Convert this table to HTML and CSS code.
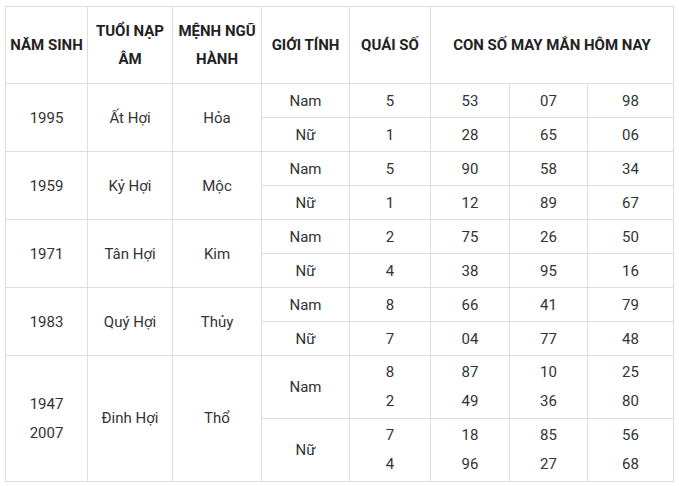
FILE: index.html
```html
<!DOCTYPE html>
<html lang="vi">
<head>
<meta charset="utf-8">
<link rel="stylesheet" href="styles.css">
</head>
<body>
<table class="lucky">
  <colgroup>
    <col class="c1"><col class="c2"><col class="c3"><col class="c4"><col class="c5"><col class="c6"><col class="c7"><col class="c8">
  </colgroup>
  <thead>
    <tr class="head">
      <th>NĂM SINH</th>
      <th>TUỔI NẠP<br>ÂM</th>
      <th>MỆNH NGŨ<br>HÀNH</th>
      <th>GIỚI TÍNH</th>
      <th>QUÁI SỐ</th>
      <th colspan="3">CON SỐ MAY MẮN HÔM NAY</th>
    </tr>
  </thead>
  <tbody>
    <tr class="row"><td rowspan="2">1995</td><td rowspan="2">Ất Hợi</td><td rowspan="2">Hỏa</td><td>Nam</td><td>5</td><td>53</td><td>07</td><td>98</td></tr>
    <tr class="row"><td>Nữ</td><td>1</td><td>28</td><td>65</td><td>06</td></tr>
    <tr class="row"><td rowspan="2">1959</td><td rowspan="2">Kỷ Hợi</td><td rowspan="2">Mộc</td><td>Nam</td><td>5</td><td>90</td><td>58</td><td>34</td></tr>
    <tr class="row"><td>Nữ</td><td>1</td><td>12</td><td>89</td><td>67</td></tr>
    <tr class="row"><td rowspan="2">1971</td><td rowspan="2">Tân Hợi</td><td rowspan="2">Kim</td><td>Nam</td><td>2</td><td>75</td><td>26</td><td>50</td></tr>
    <tr class="row"><td>Nữ</td><td>4</td><td>38</td><td>95</td><td>16</td></tr>
    <tr class="row"><td rowspan="2">1983</td><td rowspan="2">Quý Hợi</td><td rowspan="2">Thủy</td><td>Nam</td><td>8</td><td>66</td><td>41</td><td>79</td></tr>
    <tr class="row"><td>Nữ</td><td>7</td><td>04</td><td>77</td><td>48</td></tr>
    <tr class="row tall"><td rowspan="2">1947<br>2007</td><td rowspan="2">Đinh Hợi</td><td rowspan="2">Thổ</td><td>Nam</td><td>8<br>2</td><td>87<br>49</td><td>10<br>36</td><td>25<br>80</td></tr>
    <tr class="row tall"><td>Nữ</td><td>7<br>4</td><td>18<br>96</td><td>85<br>27</td><td>56<br>68</td></tr>
  </tbody>
</table>
</body>
</html>
```

FILE: styles.css
```css
html, body {
  margin: 0;
  padding: 0;
  background: #ffffff;
}

body {
  padding: 6px 0 0 5px;
  font-family: Roboto, "Noto Sans", "Liberation Sans", sans-serif;
}

.lucky {
  border-collapse: collapse;
  table-layout: fixed;
  width: 668px;
  color: #333333;
  font-size: 15px;
}

.c1 { width: 82px; }
.c2 { width: 85px; }
.c3 { width: 89px; }
.c4 { width: 88px; }
.c5 { width: 81px; }
.c6 { width: 79px; }
.c7 { width: 78px; }
.c8 { width: 86px; }

.lucky th,
.lucky td {
  border: 1px solid #dddddd;
  text-align: center;
  vertical-align: middle;
  padding: 0 2px;
}

.lucky th {
  font-weight: 700;
  font-size: 15px;
  color: #222222;
  line-height: 28px;
}

.head th { height: 76px; }

.row td {
  height: 33px;
  line-height: 28px;
}

.row.tall td {
  height: 62px;
  line-height: 29px;
}
```
